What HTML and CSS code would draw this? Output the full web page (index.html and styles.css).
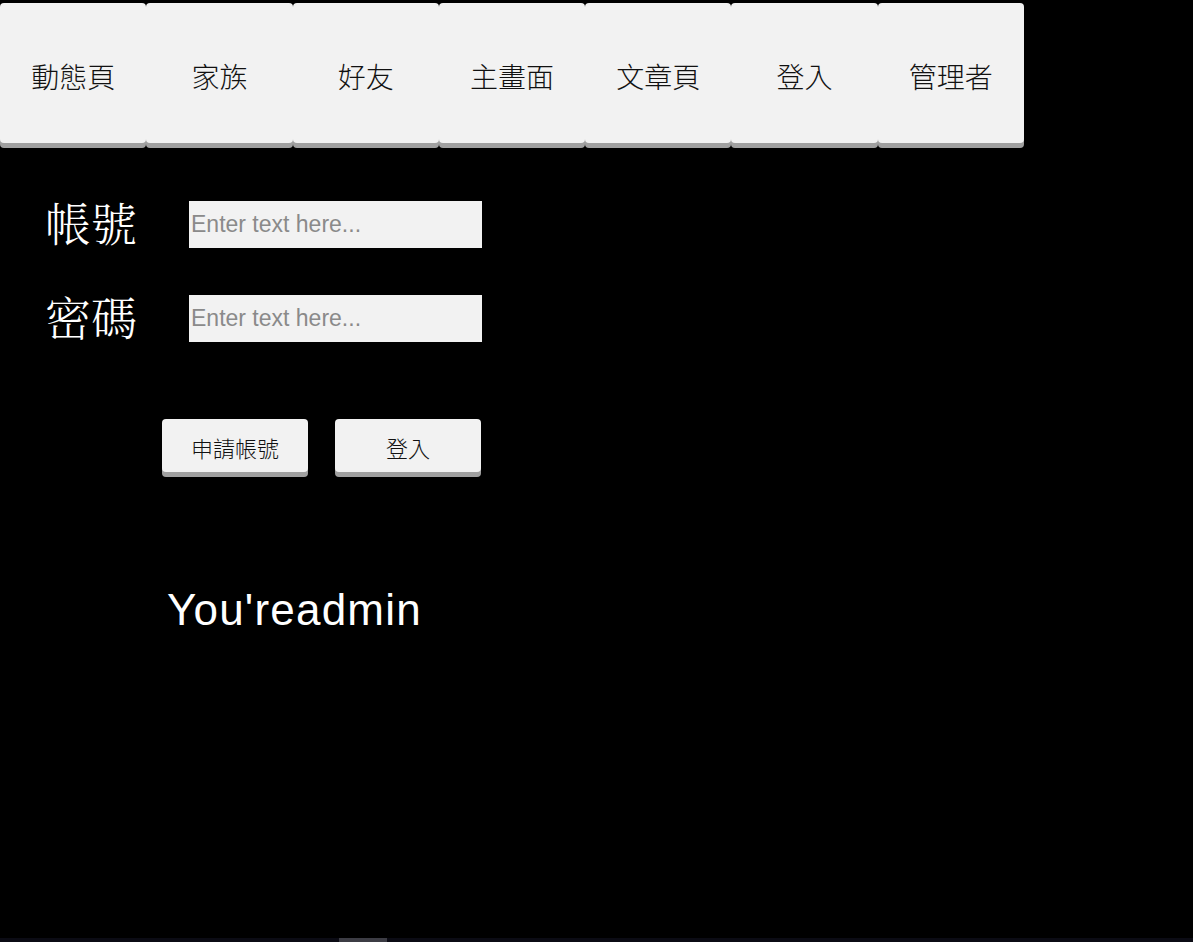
FILE: index.html
```html
<!DOCTYPE html>
<html lang="zh-Hant">
<head>
<meta charset="utf-8">
<title>登入</title>
<link rel="stylesheet" href="styles.css">
</head>
<body>
<nav class="nav">
  <a class="nav-btn">動態頁</a>
  <a class="nav-btn">家族</a>
  <a class="nav-btn">好友</a>
  <a class="nav-btn">主畫面</a>
  <a class="nav-btn">文章頁</a>
  <a class="nav-btn">登入</a>
  <a class="nav-btn">管理者</a>
</nav>
<main class="login">
  <div class="row">
    <label class="label">帳號</label>
    <input class="field" type="text" placeholder="Enter text here...">
  </div>
  <div class="row row-second">
    <label class="label">密碼</label>
    <input class="field" type="password" placeholder="Enter text here...">
  </div>
  <div class="actions">
    <button class="btn">申請帳號</button>
    <button class="btn">登入</button>
  </div>
  <p class="status">You'readmin</p>
</main>
<div class="scrollbar"><div class="thumb"></div></div>
</body>
</html>
```
FILE: styles.css
```css
html, body {
  margin: 0;
  padding: 0;
  background: #000;
  height: 100%;
  overflow: hidden;
}
body {
  font-family: "Liberation Sans", Arial, sans-serif;
  position: relative;
}
.nav {
  display: flex;
  width: 1024px;
  padding-top: 3px;
}
.nav-btn {
  flex: 1;
  height: 140px;
  display: flex;
  align-items: center;
  justify-content: center;
  padding-top: 5px;
  box-sizing: border-box;
  background: #f2f2f2;
  border-radius: 4px;
  box-shadow: 0 5px 0 #a0a0a0;
  color: #111;
  font-family: "Noto Sans CJK TC", sans-serif;
  font-size: 28px;
  font-weight: 300;
}
.login {
  padding-top: 58px;
}
.row {
  display: flex;
  align-items: center;
  height: 47px;
}
.row-second {
  margin-top: 47px;
}
.label {
  flex: none;
  width: 189px;
  padding-left: 45px;
  padding-bottom: 7px;
  box-sizing: border-box;
  color: #fff;
  font-family: "Noto Serif CJK TC", "AR PL UMing TW", "Noto Sans CJK TC", serif;
  font-size: 46px;
  font-weight: 300;
  line-height: 1;
}
.field {
  flex: none;
  width: 293px;
  height: 47px;
  box-sizing: border-box;
  border: none;
  outline: none;
  background: #f2f2f2;
  padding: 0 2px;
  font-family: "Liberation Sans", Arial, sans-serif;
  font-size: 23px;
  color: #333;
}
.field::placeholder {
  color: #8a8a8a;
}
.actions {
  display: flex;
  gap: 27px;
  margin-top: 77px;
  padding-left: 162px;
}
.btn {
  width: 146px;
  height: 53px;
  border: none;
  border-radius: 4px;
  background: #f2f2f2;
  box-shadow: 0 5px 0 #a0a0a0;
  font-family: "Noto Sans CJK TC", sans-serif;
  font-size: 22px;
  font-weight: 300;
  color: #111;
  padding: 3px 0 0;
}
.status {
  margin: 116px 0 0 167px;
  color: #fff;
  font-family: "Liberation Sans", Arial, sans-serif;
  font-size: 44px;
  letter-spacing: 1.2px;
  line-height: 1;
}
.scrollbar {
  position: absolute;
  left: 0;
  right: 0;
  bottom: 0;
  height: 4px;
  background: #0b0b14;
}
.thumb {
  margin-left: 339px;
  width: 48px;
  height: 4px;
  background: #3c3c44;
}
```
